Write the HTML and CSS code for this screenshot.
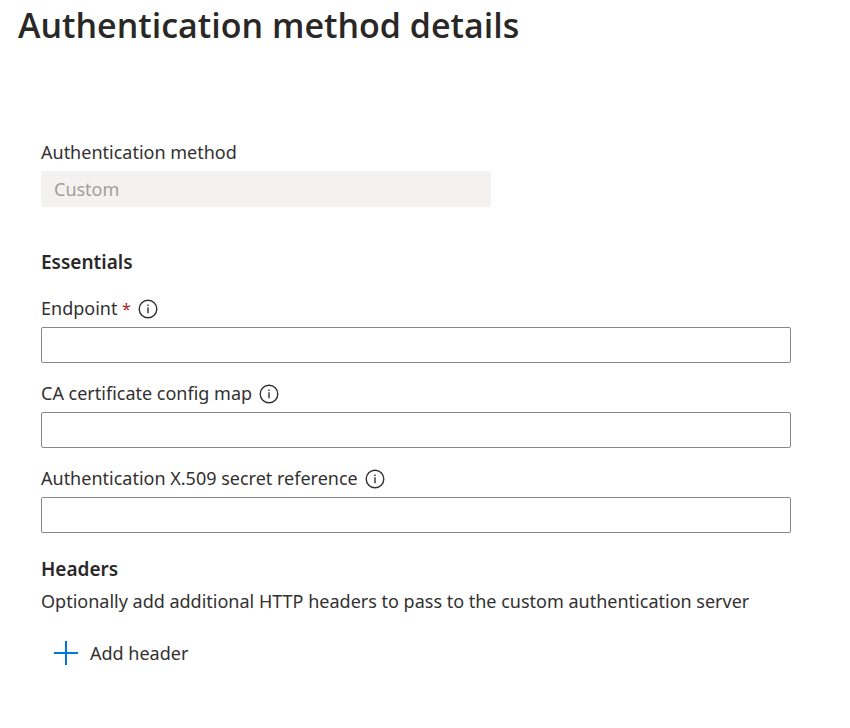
FILE: index.html
```html
<!DOCTYPE html>
<html lang="en">
<head>
<meta charset="utf-8">
<meta name="viewport" content="width=device-width, initial-scale=1">
<title>Authentication method details</title>
<link rel="stylesheet" href="styles.css">
</head>
<body>
<main class="page">
  <h1 class="page-title">Authentication method details</h1>
  <form class="form">
    <div class="field method">
      <div class="label-row"><label for="method">Authentication method</label></div>
      <input class="input input-disabled" id="method" type="text" value="Custom" disabled>
    </div>
    <section class="essentials">
      <h2 class="section-title">Essentials</h2>
      <div class="field">
        <div class="label-row">
          <label for="endpoint">Endpoint <span class="required">*</span></label>
          <svg class="info" viewBox="0 0 20 20" aria-hidden="true"><circle cx="10" cy="10" r="8.8"/><path d="M10 8.3v6M10 5.6v1.4"/></svg>
        </div>
        <input class="input" id="endpoint" type="text" required>
      </div>
      <div class="field">
        <div class="label-row">
          <label for="ca-map">CA certificate config map</label>
          <svg class="info" viewBox="0 0 20 20" aria-hidden="true"><circle cx="10" cy="10" r="8.8"/><path d="M10 8.3v6M10 5.6v1.4"/></svg>
        </div>
        <input class="input" id="ca-map" type="text">
      </div>
      <div class="field">
        <div class="label-row">
          <label for="secret">Authentication X.509 secret reference</label>
          <svg class="info" viewBox="0 0 20 20" aria-hidden="true"><circle cx="10" cy="10" r="8.8"/><path d="M10 8.3v6M10 5.6v1.4"/></svg>
        </div>
        <input class="input" id="secret" type="text">
      </div>
    </section>
    <section class="headers">
      <h2 class="section-title">Headers</h2>
      <p class="description">Optionally add additional HTTP headers to pass to the custom authentication server</p>
      <button class="add-button" type="button">
        <svg class="plus" viewBox="0 0 25 24" aria-hidden="true"><path d="M13 0v24M1 12h24"/></svg>
        <span>Add header</span>
      </button>
    </section>
  </form>
</main>
</body>
</html>
```
FILE: styles.css
```css
* { box-sizing: border-box; }
body {
  margin: 0;
  background: #fff;
  color: #323130;
  font-family: "Noto Sans", "Open Sans", sans-serif;
  font-size: 18px;
  line-height: 28px;
}
.page-title {
  margin: 0;
  padding: 0 18px;
  color: #292827;
  font-family: "Open Sans", "Noto Sans", sans-serif;
  font-size: 34px;
  line-height: 50px;
  font-weight: 600;
}
.form { padding: 88px 59px 0 41px; }
.label-row {
  display: flex;
  align-items: center;
  gap: 7px;
  height: 28px;
  margin-bottom: 5px;
}
.required { color: #a4262c; font-size: 16px; }
.info { width: 20px; height: 20px; margin-top: 2px; fill: none; stroke: #323130; stroke-width: 1.4; }
.input {
  display: block;
  width: 100%;
  height: 36px;
  padding: 0 12px;
  border: 1px solid #8a8886;
  border-radius: 2px;
  background: #fff;
  color: inherit;
  font: inherit;
}
.input-disabled { width: 60%; background: #f3f2f1; border-color: #f3f2f1; color: #a19f9d; }
.essentials { padding-top: 41px; }
.section-title { margin: 0; color: #292827; font-size: 19px; line-height: 28px; font-weight: 600; }
.essentials .section-title { margin-bottom: 18px; }
.essentials .field + .field { margin-top: 16px; }
.headers { padding-top: 22px; }
.description { margin: 4px 0 0; }
.add-button {
  display: flex;
  align-items: center;
  gap: 12px;
  margin-top: 20px;
  padding: 4px 12px;
  border: 0;
  background: none;
  color: inherit;
  font: inherit;
}
.plus { width: 25px; height: 24px; fill: none; stroke: #0078d4; stroke-width: 2; }
```
